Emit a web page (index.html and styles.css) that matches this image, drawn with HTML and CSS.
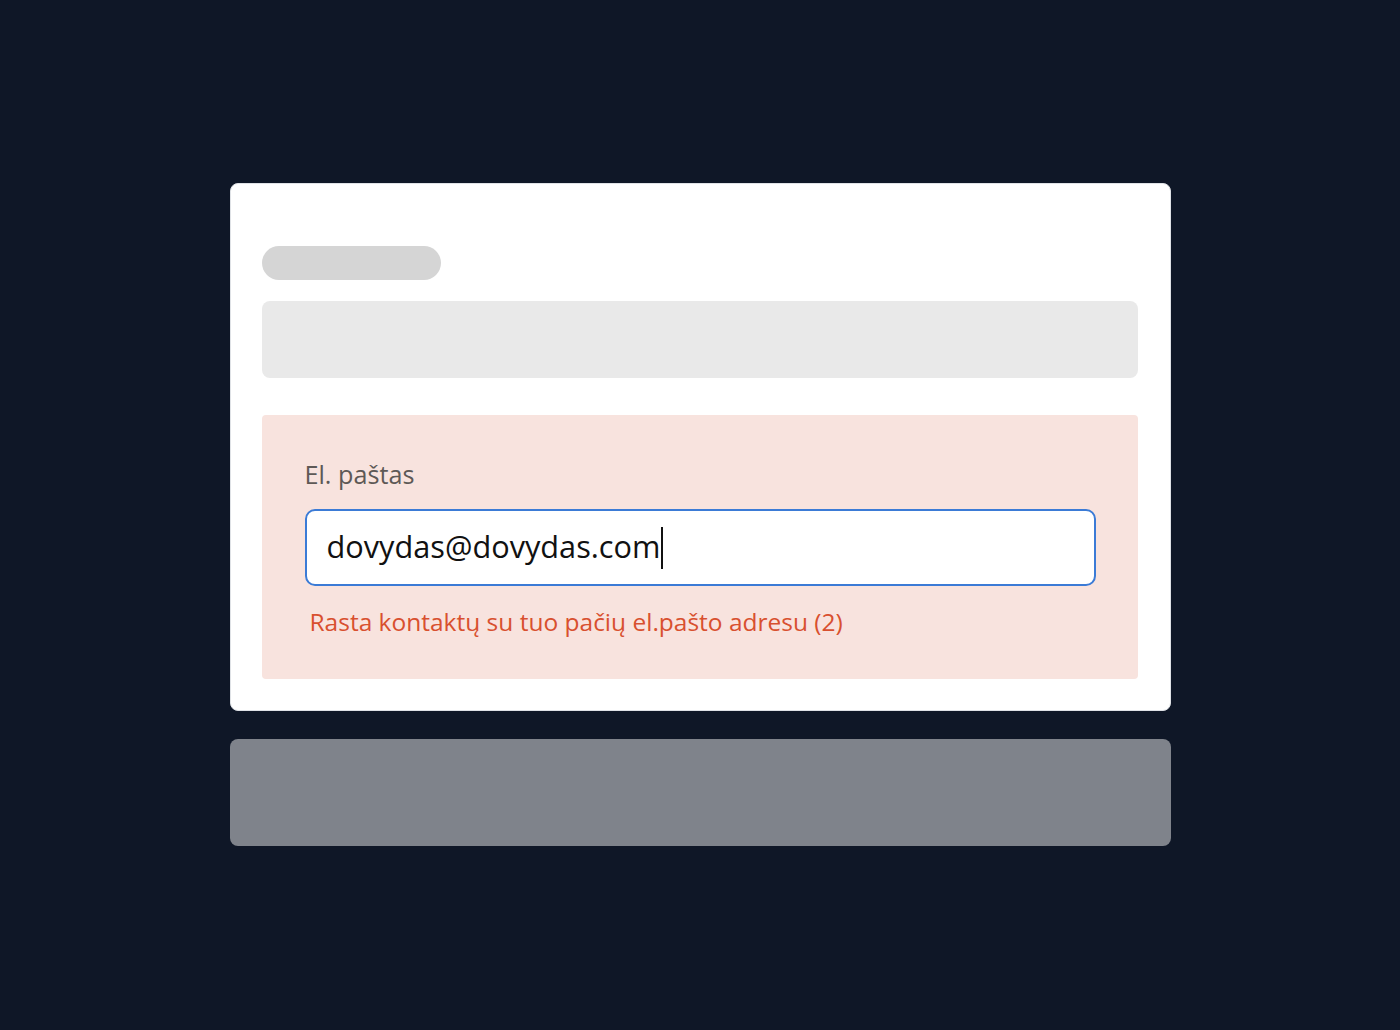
FILE: index.html
```html
<!DOCTYPE html>
<html lang="lt">
<head>
    <meta charset="UTF-8">
    <meta name="viewport" content="width=device-width, initial-scale=1.0">
    <title>Kontaktas</title>
    <link rel="stylesheet" href="styles.css">
</head>
<body>
    <div class="page">
        <div class="card">
            <div class="skeleton-title"></div>
            <div class="skeleton-field"></div>

            <div class="field-error">
                <label class="field-label" for="email">El. paštas</label>
                <div class="input-box">
                    <span class="input-value" id="email">dovydas@dovydas.com</span><span class="caret"></span>
                </div>
                <p class="error-text">Rasta kontaktų su tuo pačių el.pašto adresu (2)</p>
            </div>
        </div>

        <div class="footer-bar"></div>
    </div>
</body>
</html>
```

FILE: styles.css
```css
* {
    margin: 0;
    padding: 0;
    box-sizing: border-box;
}

body {
    background: #0f1727;
    font-family: 'Open Sans', 'Noto Sans', sans-serif;
    height: 100vh;
    overflow: hidden;
}

.page {
    width: 941px;
    margin: 183px auto 0;
    display: flex;
    flex-direction: column;
    gap: 28px;
}

.card {
    background: #ffffff;
    border: 1px solid #dfe2e6;
    border-radius: 8px;
    padding: 62px 32px 31px 31px;
    display: flex;
    flex-direction: column;
}

.skeleton-title {
    width: 179px;
    height: 34px;
    background: #d5d5d5;
    border-radius: 17px;
}

.skeleton-field {
    height: 77px;
    margin-top: 21px;
    background: #e9e9e9;
    border-radius: 8px;
}

/* Error state */
.field-error {
    margin-top: 37px;
    background: #f8e3de;
    border-radius: 4px;
    padding: 44px 42px 42px 43px;
    display: flex;
    flex-direction: column;
}

.field-label {
    font-size: 25.2px;
    color: #5e5956;
    line-height: 30px;
}

.input-box {
    margin-top: 20px;
    height: 77px;
    background: #ffffff;
    border: 2px solid #3b7bd6;
    border-radius: 10px;
    padding: 0 20px;
    display: flex;
    align-items: center;
}

.input-value {
    font-size: 30.7px;
    line-height: 40px;
    color: #111111;
    margin-top: -3px;
}

.caret {
    width: 2px;
    height: 42px;
    background: #111111;
    margin-left: 1px;
}

.error-text {
    margin-top: 21px;
    padding-left: 5px;
    font-size: 24.5px;
    line-height: 30px;
    color: #d8502f;
}

.footer-bar {
    height: 107px;
    background: #7f838b;
    border-radius: 8px;
}
```
